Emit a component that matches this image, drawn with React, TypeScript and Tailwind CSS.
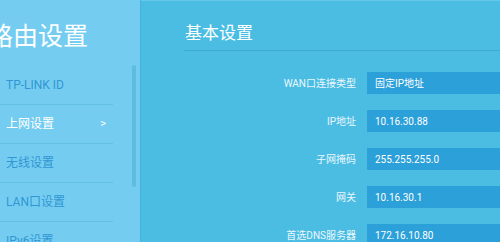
const MENU = [
  { label: "TP-LINK ID" },
  { label: "上网设置", active: true },
  { label: "无线设置" },
  { label: "LAN口设置" },
  { label: "IPv6设置" },
];

const FIELDS = [
  { label: "WAN口连接类型", value: "固定IP地址" },
  { label: "IP地址", value: "10.16.30.88" },
  { label: "子网掩码", value: "255.255.255.0" },
  { label: "网关", value: "10.16.30.1" },
  { label: "首选DNS服务器", value: "172.16.10.80" },
];

const font = "font-['Roboto','Noto_Sans_CJK_SC',sans-serif]";

export default function App() {
  return (
    <div className={`w-[500px] h-[242px] overflow-hidden flex ${font}`}>
      {/* 左侧菜单 */}
      <aside className="relative w-[141px] shrink-0 h-full bg-[#74cdf0] border-r border-[#46b3dc]">
        <h1 className="mt-[24px] ml-[-12px] text-[25px] leading-[25px] text-white whitespace-nowrap">
          路由设置
        </h1>
        <ul className="mt-[17px] w-[113px]">
          {MENU.map((item) => (
            <li
              key={item.label}
              className="h-[39px] flex items-center justify-between pl-[6px] pr-[7px] border-b border-[#62bfe6] text-[12px]"
            >
              <span className={item.active ? "text-white" : "text-[#3196d3]"}>{item.label}</span>
              {item.active && <span className="text-white text-[11px]">&gt;</span>}
            </li>
          ))}
        </ul>
        <div className="absolute left-[132px] top-[65px] w-[4px] h-[122px] rounded-full bg-[#5ebbe2]" />
      </aside>

      {/* 右侧内容 */}
      <main className="flex-1 h-full bg-[#4bbde3] border-t border-[#66c8ea] pl-[43px]">
        <h2 className="mt-[24px] pl-[1px] text-[17px] leading-[17px] text-white">基本设置</h2>
        <div className="mt-[8px] h-px bg-[#3fa9d4]" />
        <div className="mt-[21px] grid grid-cols-[172px_1fr] gap-x-[11px] gap-y-[16px]">
          {FIELDS.map((f) => (
            <div key={f.label} className="contents">
              <div className="h-[22px] flex items-center justify-end text-[10px] text-[#eaf7fd] whitespace-nowrap">
                {f.label}
              </div>
              <div className="h-[22px] flex items-center pl-[8px] bg-[#2ba0d9] text-[10px] text-white whitespace-nowrap">
                {f.value}
              </div>
            </div>
          ))}
        </div>
      </main>
    </div>
  );
}
